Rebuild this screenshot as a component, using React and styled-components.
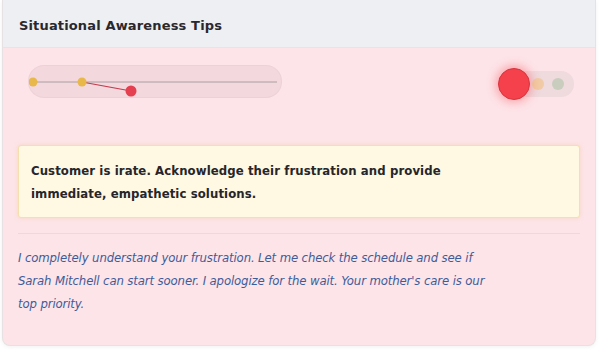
import React from 'react';
import styled, { createGlobalStyle } from 'styled-components';

const GlobalStyle = createGlobalStyle`
    html, body {
        margin: 0;
        padding: 0;
        background: #ffffff;
    }
    body {
        font-family: "DejaVu Sans", Verdana, sans-serif;
        padding: 0 4px 4px 2px;
    }
`;

const points = [
    { x: 4, y: 16, color: '#e8b94a', r: 4.5 },
    { x: 53, y: 16, color: '#e8b94a', r: 4.5 },
    { x: 102, y: 25, color: '#e5404f', r: 5.5 },
];

function SentimentTrack() {
    return (
        <Track>
            <svg width="252" height="31" viewBox="0 0 252 31">
                <line x1="4" y1="16" x2="248" y2="16" stroke="#a99ea2" strokeWidth="1" />
                <line x1="53" y1="16" x2="102" y2="25" stroke="#c33a4c" strokeWidth="1.2" />
                {points.map((p, i) => (
                    <circle key={i} cx={p.x} cy={p.y} r={p.r} fill={p.color} />
                ))}
            </svg>
        </Track>
    );
}

function TrafficLight({ level }) {
    return (
        <Light>
            <Lamp $color="#f4414b" $active={level === 'red'} />
            <Lamp $color="#f3b860" $active={level === 'amber'} />
            <Lamp $color="#9bbd97" $active={level === 'green'} />
        </Light>
    );
}

function App() {
    return (
        <>
            <GlobalStyle />
            <Panel>
                <Header>Situational Awareness Tips</Header>
                <Body>
                    <Meters>
                        <SentimentTrack />
                        <TrafficLight level="red" />
                    </Meters>
                    <TipBox>
                        <TipText>
                            Customer is irate. Acknowledge their frustration and provide immediate, empathetic solutions.
                        </TipText>
                    </TipBox>
                    <Divider />
                    <Suggestion>
                        I completely understand your frustration. Let me check the schedule and see if Sarah Mitchell can start sooner. I apologize for the wait. Your mother's care is our top priority.
                    </Suggestion>
                </Body>
            </Panel>
        </>
    );
}

const Panel = styled.div`
    height: 346px;
    box-sizing: border-box;
    display: flex;
    flex-direction: column;
    border: 1px solid #e6e2e4;
    border-top: none;
    border-radius: 0 0 8px 8px;
    overflow: hidden;
    box-shadow: 0 1px 4px rgba(0, 0, 0, 0.06);
    background: #fde4e8;
`;

const Header = styled.div`
    height: 48px;
    flex-shrink: 0;
    box-sizing: border-box;
    display: flex;
    align-items: center;
    padding: 4px 16px 0;
    background: #eeeff2;
    border-bottom: 1px solid #e9e3e6;
    font-size: 13px;
    font-weight: bold;
    letter-spacing: 0.15px;
    color: #29292d;
`;

const Body = styled.div`
    flex: 1;
    padding: 16px 15px 0 15px;
    display: flex;
    flex-direction: column;
`;

const Meters = styled.div`
    display: flex;
    align-items: center;
    justify-content: space-between;
    padding: 0 6px 0 10px;
    height: 34px;
`;

const Track = styled.div`
    width: 252px;
    height: 31px;
    border-radius: 16px;
    background: rgba(170, 140, 150, 0.12);
    border: 1px solid rgba(180, 150, 160, 0.1);
    svg {
        display: block;
    }
`;

const Light = styled.div`
    display: flex;
    align-items: center;
    gap: 8px;
    height: 26px;
    padding: 0 10px 0 0;
    margin-top: 5px;
    border-radius: 13px;
    background: rgba(190, 180, 185, 0.22);
`;

const Lamp = styled.span`
    display: block;
    border-radius: 50%;
    background: ${(p) => p.$color};
    width: ${(p) => (p.$active ? '32px' : '12px')};
    height: ${(p) => (p.$active ? '32px' : '12px')};
    opacity: ${(p) => (p.$active ? 1 : 0.45)};
    margin-left: ${(p) => (p.$active ? '-9px' : '0')};
    margin-right: ${(p) => (p.$active ? '-6px' : '0')};
    box-shadow: ${(p) => (p.$active ? '0 0 8px 3px rgba(244, 65, 75, 0.35)' : 'none')};
    border: ${(p) => (p.$active ? '1px solid #d8343e' : 'none')};
    box-sizing: border-box;
    position: relative;
`;

const TipBox = styled.div`
    margin-top: 47px;
    padding: 13px 12px 12px;
    background: #fff8e3;
    border: 1px solid #f5dfae;
    border-radius: 3px;
    box-shadow: 0 0 4px rgba(230, 190, 120, 0.35);
`;

const TipText = styled.p`
    margin: 0;
    max-width: 460px;
    font-family: "DejaVu Sans Condensed", "DejaVu Sans", sans-serif;
    font-stretch: condensed;
    font-size: 13px;
    font-weight: bold;
    letter-spacing: 0.1px;
    line-height: 23px;
    color: #26262a;
`;

const Divider = styled.hr`
    margin: 15px 0 0;
    border: none;
    border-top: 1px solid #f1d6db;
`;

const Suggestion = styled.p`
    margin: 12px 0 0;
    max-width: 485px;
    font-family: "DejaVu Sans Condensed", "DejaVu Sans", sans-serif;
    font-stretch: condensed;
    font-size: 13px;
    font-style: italic;
    letter-spacing: -0.12px;
    line-height: 23px;
    color: #3d5c9a;
`;

export default App;
